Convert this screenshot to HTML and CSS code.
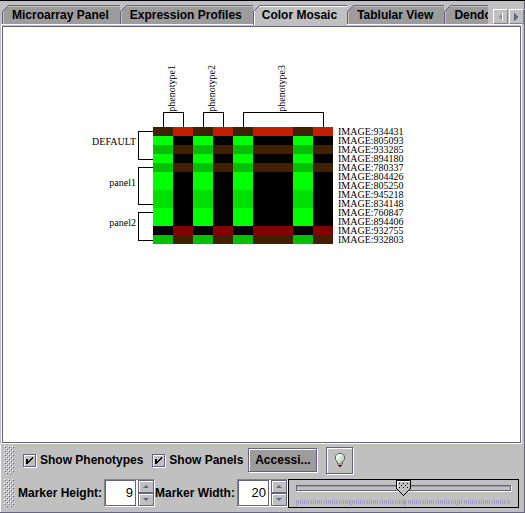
FILE: index.html
```html
<!DOCTYPE html>
<html lang="en">
<head>
<meta charset="utf-8">
<title>Color Mosaic</title>
<link rel="stylesheet" href="styles.css">
</head>
<body>
<main class="window">
  <nav class="tabbar">
    <div class="tabs" role="tablist">
      <button class="tab" role="tab">Microarray Panel</button>
      <button class="tab" role="tab">Expression Profiles</button>
      <button class="tab selected" role="tab" aria-selected="true">Color Mosaic</button>
      <button class="tab" role="tab">Tablular View</button>
      <button class="tab" role="tab">Dendogram</button>
    </div>
    <div class="scrollers">
      <button class="scroller" aria-label="Scroll tabs left"><svg width="5" height="8" viewBox="0 0 5 8" shape-rendering="crispEdges"><path d="M4 0v8L0 4z" fill="#999"/><path d="M4 0h1v8h-1z" fill="#fff"/></svg></button>
      <button class="scroller" aria-label="Scroll tabs right"><svg width="5" height="8" viewBox="0 0 5 8" shape-rendering="crispEdges"><path d="M0 0v8l4-4z" fill="#636394"/></svg></button>
    </div>
  </nav>

  <section class="canvas">
    <div class="mosaic">
      <div class="phenotypes">
        <div class="phenotype"><span class="upright">phenotype1</span><i class="bracket-top"></i></div>
        <div class="phenotype"><span class="upright">phenotype2</span><i class="bracket-top"></i></div>
        <div class="phenotype wide"><span class="upright">phenotype3</span><i class="bracket-top"></i></div>
      </div>
      <div class="panels">
        <div class="panel four"><span>DEFAULT</span><i class="bracket-left"></i></div>
        <div class="panel five"><span>panel1</span><i class="bracket-left"></i></div>
        <div class="panel four"><span>panel2</span><i class="bracket-left"></i></div>
      </div>
      <table class="heat">
        <tbody>
          <tr><td class="brown"></td><td class="red"></td><td class="brown"></td><td class="red"></td><td class="brown"></td><td class="red"></td><td class="red"></td><td class="brown"></td><td class="red"></td><th scope="row">IMAGE:934431</th></tr>
          <tr><td class="g3"></td><td></td><td class="g3"></td><td></td><td class="g3"></td><td></td><td></td><td class="g3"></td><td></td><th scope="row">IMAGE:805093</th></tr>
          <tr><td class="g1"></td><td class="brown"></td><td class="g1"></td><td class="brown"></td><td class="g1"></td><td class="brown"></td><td class="brown"></td><td class="g1"></td><td class="brown"></td><th scope="row">IMAGE:933285</th></tr>
          <tr><td class="g3"></td><td></td><td class="g3"></td><td></td><td class="g3"></td><td></td><td></td><td class="g3"></td><td></td><th scope="row">IMAGE:894180</th></tr>
          <tr><td class="g1"></td><td class="brown"></td><td class="g1"></td><td class="brown"></td><td class="g1"></td><td class="brown"></td><td class="brown"></td><td class="g1"></td><td class="brown"></td><th scope="row">IMAGE:780337</th></tr>
          <tr><td class="g3"></td><td></td><td class="g3"></td><td></td><td class="g3"></td><td></td><td></td><td class="g3"></td><td></td><th scope="row">IMAGE:804426</th></tr>
          <tr><td class="g3"></td><td></td><td class="g3"></td><td></td><td class="g3"></td><td></td><td></td><td class="g3"></td><td></td><th scope="row">IMAGE:805250</th></tr>
          <tr><td class="g2"></td><td></td><td class="g2"></td><td></td><td class="g2"></td><td></td><td></td><td class="g2"></td><td></td><th scope="row">IMAGE:945218</th></tr>
          <tr><td class="g2"></td><td></td><td class="g2"></td><td></td><td class="g2"></td><td></td><td></td><td class="g2"></td><td></td><th scope="row">IMAGE:834148</th></tr>
          <tr><td class="g3"></td><td></td><td class="g3"></td><td></td><td class="g3"></td><td></td><td></td><td class="g3"></td><td></td><th scope="row">IMAGE:760847</th></tr>
          <tr><td class="g3"></td><td></td><td class="g3"></td><td></td><td class="g3"></td><td></td><td></td><td class="g3"></td><td></td><th scope="row">IMAGE:894406</th></tr>
          <tr><td></td><td class="dark"></td><td></td><td class="dark"></td><td></td><td class="dark"></td><td class="dark"></td><td></td><td class="dark"></td><th scope="row">IMAGE:932755</th></tr>
          <tr><td class="g1"></td><td class="brown"></td><td class="g1"></td><td class="brown"></td><td class="g1"></td><td class="brown"></td><td class="brown"></td><td class="g1"></td><td class="brown"></td><th scope="row">IMAGE:932803</th></tr>
        </tbody>
      </table>
    </div>
  </section>

  <footer class="toolbars">
    <div class="toolbar">
      <i class="grip"></i>
      <label class="check"><input type="checkbox" checked>Show Phenotypes</label>
      <label class="check"><input type="checkbox" checked>Show Panels</label>
      <button class="access">Accessi...</button>
      <button class="bulb" aria-label="Toggle hints">
        <svg width="12" height="15" viewBox="0 0 12 15">
          <path d="M4 .5h4l2.500 2.500v3.500L8.500 9v2h-5V9L1.500 6.500V3z" fill="#d6e7d6" stroke="#63635a"/>
          <path d="M4 1.500h3v1H5v3H3v1H2v-3z" fill="#fff"/>
          <path d="M8.500 2.500h1v3.500L8 8.500V10H6V8h1l1.500-2z" fill="#adbda5"/>
          <path d="M4 10h4v3H7v1H5v-1H4z" fill="#b58c9c"/>
          <path d="M4 12h4v1H4zM5 13h2v1H5z" fill="#422931"/>
        </svg>
      </button>
    </div>
    <div class="toolbar">
      <i class="grip"></i>
      <label class="name" for="height">Marker Height:</label>
      <div class="spinner">
        <input id="height" type="text" value="9">
        <div class="steps">
          <button aria-label="Increase height"><i class="up"></i></button>
          <button aria-label="Decrease height"><i class="down"></i></button>
        </div>
      </div>
      <label class="name second" for="width">Marker Width:</label>
      <div class="spinner">
        <input id="width" type="text" value="20">
        <div class="steps">
          <button aria-label="Increase width"><i class="up"></i></button>
          <button aria-label="Decrease width"><i class="down"></i></button>
        </div>
      </div>
      <div class="slider">
        <input type="range" min="1" max="101" value="51" aria-label="Intensity">
        <svg class="ticks" shape-rendering="crispEdges">
          <path d="M0 2h214" stroke="#9c9cce" stroke-width="4" stroke-dasharray="1 1 1 1 1 1 1 1 1 1 1 1 1 2 1 1 1 1 1 1 1 1 1 1 1 2"/>
          <path d="M0 0h1v6H0zM54 0h1v6h-1zM108 0h1v6h-1zM161 0h1v6h-1z" fill="#9c9cce"/>
        </svg>
      </div>
    </div>
  </footer>
</main>
</body>
</html>
```
FILE: styles.css
```css
* { box-sizing: border-box; }

body {
  margin: 0;
  background: #c0c0c0;
  color: #000;
  font: bold 12px/16px "Liberation Sans", Arial, sans-serif;
}

button, input { margin: 0; padding: 0; font: inherit; color: inherit; border-radius: 0; }

.window {
  display: flex;
  flex-direction: column;
  min-height: 100vh;
  border-top: 1px solid #000;
  border-right: 1px solid #636384;
  border-bottom: 1px solid #636384;
}

/* Tabs: the selected one runs over the top edge of the canvas */
.tabbar { position: relative; z-index: 1; display: flex; padding: 4px 0 0 2px; height: 24px; }
.tabs { display: flex; flex: 1; min-width: 0; overflow: hidden; }
.tab {
  position: relative;
  flex: none;
  height: 19px;
  padding: 0 11px 1px 9px;
  border: solid #636384;
  border-width: 1px 0 0 1px;
  background: #9c9c9c;
  box-shadow: inset 1px 1px #c0c0c0;
  white-space: nowrap;
}
.tab.selected { height: 20px; padding-left: 8px; padding-right: 10px; background: #c0c0c0; box-shadow: inset 1px 1px #fff; }
.tab::before {
  content: "";
  position: absolute;
  left: -1px;
  top: -1px;
  width: 7px;
  height: 7px;
  background: url("data:image/svg+xml,%3Csvg xmlns='http://www.w3.org/2000/svg' width='7' height='7' shape-rendering='crispEdges'%3E%3Cpath d='M0 0h6L0 6z' fill='%23c0c0c0'/%3E%3Cpath d='M0 6h1v-1h1v-1h1v-1h1v-1h1v-1h1v-1h1v1h-1v1h-1v1h-1v1h-1v1h-1v1h-1v1h-1z' fill='%23636384'/%3E%3C/svg%3E");
}
.scrollers { display: flex; gap: 1px; padding: 4px 0 0 5px; }
.scroller {
  display: grid;
  place-items: center;
  width: 15px;
  height: 15px;
  border: 1px solid;
  border-color: #fff #848484 #848484 #fff;
  background: #c0c0c0;
}

/* Mosaic */
.canvas {
  flex: 1;
  display: flex;
  margin: -1px 2px 0 1px;
  padding-top: 1px;
  border: 1px solid #fff;
}
.mosaic {
  flex: 1;
  display: grid;
  grid-template-columns: 150px 1fr;
  grid-template-rows: 100px 1fr;
  border: 1px solid #636384;
  background: #fff;
  font: 10px/9px "Liberation Serif", "Times New Roman", serif;
}
.phenotypes { grid-column: 2; display: flex; align-items: flex-end; gap: 19px; padding-left: 10px; }
.phenotype { display: flex; flex-direction: column; align-items: center; width: 21px; }
.phenotype.wide { width: 81px; }
.upright { margin-right: 5px; writing-mode: vertical-rl; transform: rotate(180deg); }
.bracket-top { width: 100%; height: 15px; border: solid #000; border-width: 1px 1px 0; }
.panels { display: flex; flex-direction: column; gap: 7px; padding-top: 4px; }
.panel { display: flex; justify-content: flex-end; align-items: center; gap: 2px; }
.panel.four { height: 29px; }
.panel.five { height: 38px; }
.panel span { padding-bottom: 8px; }
.bracket-left { width: 15px; height: 100%; border: solid #000; border-width: 1px 0 1px 1px; }

.heat { justify-self: start; align-self: start; border-collapse: collapse; }
.heat td { width: 20px; height: 9px; padding: 0; background: #000; }
.heat th { height: 9px; padding: 0 0 0 5px; font-weight: normal; text-align: left; }
.heat .brown { background: #402000; }
.heat .red { background: #c02000; }
.heat .dark { background: #800000; }
.heat .g1 { background: #00c000; }
.heat .g2 { background: #00e000; }
.heat .g3 { background: #0f0; }

/* Toolbars */
.toolbars { display: flex; flex-direction: column; gap: 5px; padding: 2px 5px 5px 3px; border-left: 1px solid #fff; }
.toolbar { display: flex; align-items: center; height: 28px; }
.grip {
  flex: none;
  width: 10px;
  height: 28px;
  background: url("data:image/svg+xml,%3Csvg xmlns='http://www.w3.org/2000/svg' width='4' height='4' shape-rendering='crispEdges'%3E%3Cpath d='M0 0h1v1H0zM2 2h1v1H2z' fill='%23fff'/%3E%3Cpath d='M1 1h1v1H1zM3 3h1v1H3z' fill='%23636394'/%3E%3C/svg%3E");
}
.check { display: flex; align-items: center; gap: 4px; margin-left: 9px; white-space: nowrap; }
.check input {
  appearance: none;
  width: 13px;
  height: 13px;
  border: 1px solid #636384;
  box-shadow: inset 1px 1px #fff, inset -1px -1px #c0c0c0, 1px 1px #fff;
}
.check input:checked {
  background: url("data:image/svg+xml,%3Csvg xmlns='http://www.w3.org/2000/svg' width='7' height='7' shape-rendering='crispEdges'%3E%3Cpath d='M0 2h2v2h1v-1h1v-1h1v-1h1v-1h1v2h-1v1h-1v1h-1v1h-1v1h-1v1H0z'/%3E%3C/svg%3E") 2px 2px no-repeat;
}
.access {
  width: 69px;
  height: 24px;
  margin-left: 5px;
  border: 1px solid #636384;
  background: #9c9c9c;
  box-shadow: inset 1px 1px #fff, 1px 1px #fff;
}
.bulb {
  display: grid;
  place-items: center;
  width: 27px;
  height: 27px;
  margin-left: 9px;
  border: 1px solid #636384;
  background: #c0c0c0;
  box-shadow: inset 1px 1px #fff, 1px 1px #fff;
}
.name { margin-left: 4px; white-space: nowrap; }
.name.second { margin-left: 0; }
.spinner {
  display: flex;
  flex: none;
  width: 51px;
  height: 28px;
  margin-left: 2px;
  border: 1px solid;
  border-color: #848484 #fff #fff #848484;
}
.spinner input {
  width: 31px;
  padding-right: 2px;
  border: 1px solid #636384;
  outline: 0;
  box-shadow: 0 1px #fff;
  background: #fff;
  font-weight: normal;
  font-size: 13px;
  text-align: right;
}
.steps { display: flex; flex: 1; flex-direction: column; padding-left: 2px; background: #fff; }
.steps button {
  display: grid;
  place-items: center;
  flex: 1;
  border: 1px solid #636384;
  background: #c0c0c0;
  box-shadow: inset 1px 1px #fff;
}
.up, .down { border: solid transparent; border-width: 0 3px; }
.up { border-bottom: 3px solid #636394; }
.down { border-top: 3px solid #636394; }
.slider {
  flex: 1;
  min-width: 0;
  display: flex;
  flex-direction: column;
  height: 29px;
  padding: 0 7px;
  border: 1px solid #000;
}
.slider input { appearance: none; display: block; width: 100%; height: 16px; background: none; }
.slider input::-webkit-slider-runnable-track {
  height: 6px;
  border: 1px solid #636384;
  background: #c0c0c0;
  box-shadow: inset 0 1px #999, 1px 1px #fff;
}
.slider input::-webkit-slider-thumb {
  appearance: none;
  width: 15px;
  height: 16px;
  margin-top: -6px;
  background: url("data:image/svg+xml,%3Csvg xmlns='http://www.w3.org/2000/svg' width='15' height='16' shape-rendering='crispEdges'%3E%3Cpath d='M.5.5h14v8l-7 7-7-7z' fill='%23c0c0c0' stroke='%23000'/%3E%3Cpath d='M1 8V1h13' fill='none' stroke='%23fff'/%3E%3Cpath d='M3 3h1v1H3zM7 3h1v1H7zM11 3h1v1h-1zM5 5h1v1H5zM9 5h1v1H9zM3 7h1v1H3zM7 7h1v1H7zM11 7h1v1h-1z'/%3E%3C/svg%3E");
}
.ticks { width: 100%; height: 6px; margin-top: 4px; }
```
